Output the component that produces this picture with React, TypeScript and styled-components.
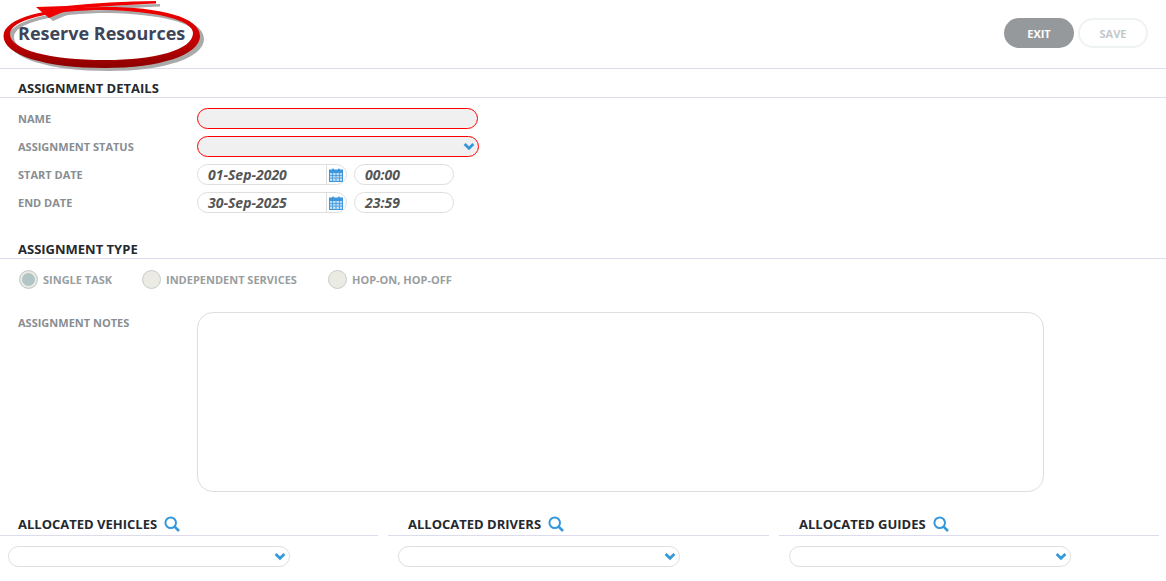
import React from 'react';
import styled, { createGlobalStyle } from 'styled-components';

const GlobalStyle = createGlobalStyle`
  html, body {
    margin: 0;
    padding: 0;
    background: #fff;
    overflow: hidden;
    font-family: 'Open Sans', 'Liberation Sans', sans-serif;
  }
  * {
    box-sizing: border-box;
  }
`;

const Page = styled.div`
  position: relative;
  width: 1166px;
  height: 581px;
  overflow: hidden;
`;

const Header = styled.header`
  height: 69px;
  display: flex;
  justify-content: space-between;
  align-items: flex-start;
  padding: 18px 18px 0 18px;
  border-bottom: 1px solid #dcdcec;
`;

const Title = styled.h1`
  margin: 3px 0 0;
  font-size: 18px;
  line-height: 24px;
  font-weight: 700;
  color: #3d4659;
`;

const Actions = styled.div`
  display: flex;
  gap: 4px;
`;

const ActionButton = styled.button<{ $primary?: boolean }>`
  width: 70px;
  height: 30px;
  padding: 0;
  border-radius: 15px;
  font-family: inherit;
  font-size: 11px;
  font-weight: 700;
  color: ${(p) => (p.$primary ? '#fff' : '#c3c8cb')};
  background: ${(p) => (p.$primary ? '#95999c' : '#fff')};
  border: 2px solid ${(p) => (p.$primary ? '#95999c' : '#eef2f0')};
`;

const SectionHeading = styled.h2<{ $top: number }>`
  margin: ${(p) => p.$top}px 0 0;
  padding-left: 18px;
  height: 20px;
  font-size: 13px;
  line-height: 20px;
  font-weight: 700;
  color: #25292e;
  border-bottom: 1px solid #dcdcec;
`;

const Fields = styled.div`
  display: flex;
  flex-direction: column;
  gap: 7px;
  margin-top: 10px;
  padding-left: 18px;
`;

const Row = styled.div`
  display: flex;
  align-items: center;
  height: 21px;
`;

const Label = styled.label`
  width: 179px;
  flex: none;
  font-size: 11px;
  font-weight: 700;
  color: #888d92;
`;

const Required = styled.div<{ $width: number }>`
  position: relative;
  width: ${(p) => p.$width}px;
  height: 21px;
  border: 1px solid #f00;
  border-radius: 10.5px;
  background: #f0f0f0;
`;

const Chevron = styled.svg`
  position: absolute;
  right: 3px;
  top: 5px;
  width: 12px;
  height: 9px;
`;

const DateBox = styled.div`
  display: flex;
  width: 150px;
  height: 21px;
  border: 1px solid #dedede;
  border-radius: 10.5px;
  overflow: hidden;
`;

const DateValue = styled.div`
  width: 129px;
  padding-left: 10px;
  font-size: 14px;
  line-height: 20px;
  font-weight: 700;
  font-style: italic;
  color: #555;
  border-right: 1px solid #dedede;
`;

const CalendarCell = styled.div`
  flex: 1;
  display: flex;
  padding-left: 2px;
  align-items: center;
`;

const TimeBox = styled(DateValue)`
  width: 100px;
  height: 21px;
  margin-left: 7px;
  border: 1px solid #dedede;
  border-radius: 10.5px;
`;

const RadioGroup = styled.div`
  display: flex;
  align-items: center;
  height: 19px;
  margin-top: 11px;
  padding-left: 19px;
`;

const RadioItem = styled.div<{ $width: number }>`
  display: flex;
  align-items: center;
  gap: 5px;
  width: ${(p) => p.$width}px;
`;

const RadioCircle = styled.span<{ $checked?: boolean }>`
  width: 19px;
  height: 19px;
  flex: none;
  border-radius: 50%;
  border: 1px solid #c6cec9;
  background: ${(p) => (p.$checked ? '#b2c5c6' : '#ebebe3')};
  box-shadow: ${(p) => (p.$checked ? 'inset 0 0 0 2px #ebebe3' : 'none')};
`;

const RadioText = styled.span`
  font-size: 11px;
  font-weight: 700;
  color: #999e9f;
  white-space: nowrap;
`;

const NotesRow = styled.div`
  display: flex;
  margin-top: 23px;
  padding-left: 18px;
`;

const NotesLabel = styled(Label)`
  padding-top: 3px;
`;

const Notes = styled.div`
  width: 847px;
  height: 180px;
  border: 1px solid #dedede;
  border-radius: 16px;
`;

const Allocations = styled.div`
  display: grid;
  grid-template-columns: 380px 381px 380px;
  column-gap: 10px;
  margin: 22px 0 0 -2px;
`;

const HeadingRow = styled.div`
  display: flex;
  align-items: center;
  gap: 7px;
  height: 22px;
  padding: 0 0 2px 20px;
  border-bottom: 1px solid #dcdcec;
  font-size: 13px;
  font-weight: 700;
  color: #25292e;
`;

const AllocationSelect = styled.div`
  position: relative;
  width: 282px;
  height: 21px;
  margin: 10px 0 0 10px;
  border: 1px solid #dedede;
  border-radius: 10.5px;
`;

const Scribble = styled.svg`
  position: absolute;
  left: 0;
  top: 0;
  width: 215px;
  height: 75px;
  pointer-events: none;
`;

const ChevronIcon = () => (
  <Chevron viewBox="0 0 12 9">
    <path d="M1.6 2 L6 6.2 L10.4 2" fill="none" stroke="#3498db" strokeWidth="2.8" />
  </Chevron>
);

const CalendarIcon = () => (
  <svg width="14" height="14" viewBox="0 0 14 14">
    <rect x="0.5" y="2" width="13" height="11.5" fill="#bcdcf5" stroke="#3d97dc" />
    <rect x="0.5" y="2" width="13" height="3" fill="#3d97dc" />
    <rect x="3" y="0.5" width="2" height="3" rx="1" fill="#3d97dc" />
    <rect x="9" y="0.5" width="2" height="3" rx="1" fill="#3d97dc" />
    <path d="M3.5 5v8M7 5v8M10.5 5v8M1 7.5h12M1 10h12" stroke="#3d97dc" strokeWidth="0.8" />
  </svg>
);

const SearchIcon = () => (
  <svg width="16" height="16" viewBox="0 0 16 16">
    <circle cx="6.7" cy="6.7" r="5.3" fill="none" stroke="#3498db" strokeWidth="2" />
    <path d="M10.6 10.6 L15 15" stroke="#3498db" strokeWidth="2.6" />
  </svg>
);

const ringPath =
  'M3.5 36 C3.5 18 45 7 105 7 C160 7 200 17 200 36 C200 55 160 68 105 68 C45 68 3.5 55 3.5 36 Z ' +
  'M10 34 C10 50 50 60 105 60 C155 60 193 50 193 33 C193 20 155 11 105 10 C50 10 10 20 10 34 Z';

const arrowPath =
  'M36 7 L66 6 C95 3 125 1.5 156 1 L156 3.5 C125 5 95 7 70 9 L49 18 Z';

const Annotation = () => (
  <Scribble viewBox="0 0 215 75">
    <defs>
      <linearGradient id="ring" x1="0" y1="0" x2="0" y2="1">
        <stop offset="0" stopColor="#f40000" />
        <stop offset="0.55" stopColor="#c40000" />
        <stop offset="1" stopColor="#8c0000" />
      </linearGradient>
    </defs>
    <path d={ringPath} fill="#aaa" fillRule="evenodd" transform="translate(4 3)" />
    <path d={arrowPath} fill="#aaa" transform="translate(4 3)" />
    <path d={ringPath} fill="url(#ring)" fillRule="evenodd" />
    <path d={arrowPath} fill="#f00000" />
  </Scribble>
);

const dates = [
  { label: 'START DATE', date: '01-Sep-2020', time: '00:00' },
  { label: 'END DATE', date: '30-Sep-2025', time: '23:59' },
];

const radios = [
  { label: 'SINGLE TASK', width: 123, checked: true },
  { label: 'INDEPENDENT SERVICES', width: 186 },
  { label: 'HOP-ON, HOP-OFF', width: 140 },
];

const allocations = ['ALLOCATED VEHICLES', 'ALLOCATED DRIVERS', 'ALLOCATED GUIDES'];

export default function App() {
  return (
    <Page>
      <GlobalStyle />
      <Header>
        <Title>Reserve Resources</Title>
        <Actions>
          <ActionButton $primary>EXIT</ActionButton>
          <ActionButton>SAVE</ActionButton>
        </Actions>
      </Header>

      <SectionHeading $top={9}>ASSIGNMENT DETAILS</SectionHeading>
      <Fields>
        <Row>
          <Label>NAME</Label>
          <Required $width={281} />
        </Row>
        <Row>
          <Label>ASSIGNMENT STATUS</Label>
          <Required $width={282}>
            <ChevronIcon />
          </Required>
        </Row>
        {dates.map((d) => (
          <Row key={d.label}>
            <Label>{d.label}</Label>
            <DateBox>
              <DateValue>{d.date}</DateValue>
              <CalendarCell>
                <CalendarIcon />
              </CalendarCell>
            </DateBox>
            <TimeBox>{d.time}</TimeBox>
          </Row>
        ))}
      </Fields>

      <SectionHeading $top={26}>ASSIGNMENT TYPE</SectionHeading>
      <RadioGroup>
        {radios.map((r) => (
          <RadioItem key={r.label} $width={r.width}>
            <RadioCircle $checked={r.checked} />
            <RadioText>{r.label}</RadioText>
          </RadioItem>
        ))}
      </RadioGroup>

      <NotesRow>
        <NotesLabel>ASSIGNMENT NOTES</NotesLabel>
        <Notes />
      </NotesRow>

      <Allocations>
        {allocations.map((title) => (
          <div key={title}>
            <HeadingRow>
              {title}
              <SearchIcon />
            </HeadingRow>
            <AllocationSelect>
              <ChevronIcon />
            </AllocationSelect>
          </div>
        ))}
      </Allocations>

      <Annotation />
    </Page>
  );
}
